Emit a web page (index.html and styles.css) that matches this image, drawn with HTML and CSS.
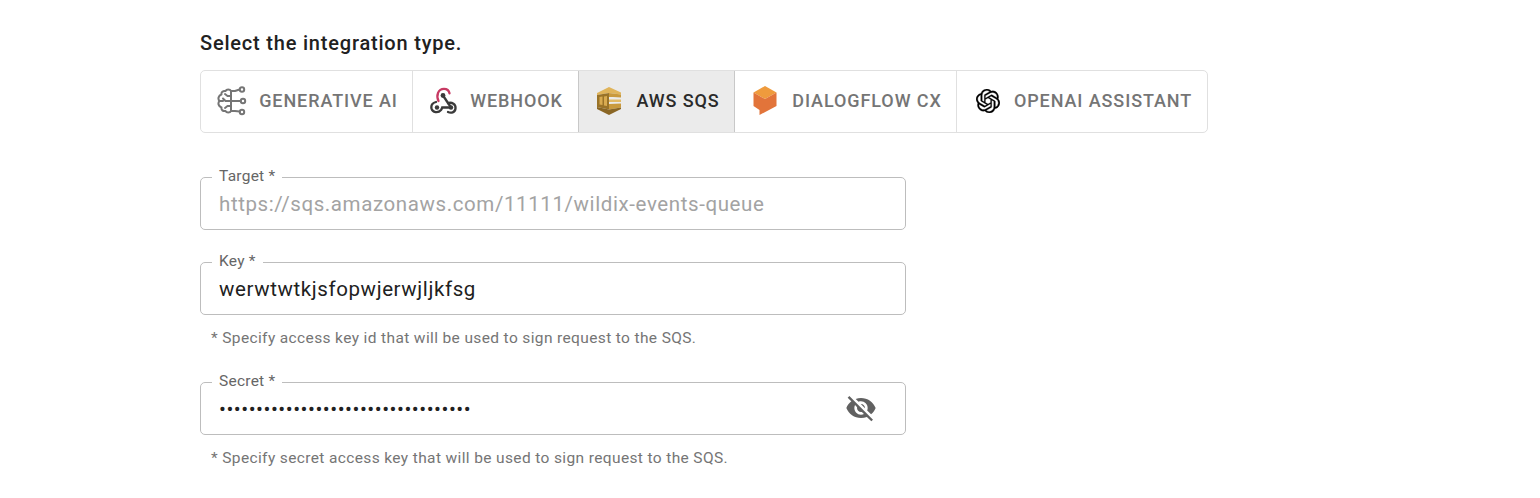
FILE: index.html
```html
<!DOCTYPE html>
<html lang="en">

<head>
    <meta charset="UTF-8">
    <meta name="viewport" content="width=device-width, initial-scale=1.0">
    <title>Integration type</title>
    <link rel="stylesheet" href="styles.css">
</head>

<body>

<div class="container">
    <h1 class="title">Select the integration type.</h1>

    <div class="toggle-group">
        <button class="toggle toggle-ai">
            <svg class="icon" width="30" height="30" viewBox="0 0 30 30" fill="none" stroke="#757575" stroke-width="2" stroke-linecap="round" stroke-linejoin="round">
                <path d="M14 5C13 3 9.500 3 8.500 5 6 4.500 4 6.500 4.500 8.500 1.500 9.500 .5 13 2.500 15 .5 17 1.500 20.500 4.500 21.500 4 24 6 25.500 8.500 25 9.500 27 13 27 14 25Z"/>
                <path d="M14 10H10.500L8 8M14 15H8.500L6 12.500M6 15H2.500M14 20H10.500L8 22"/>
                <path d="M14 5H18L22.500 3.500M14 15H23.500M14 25H18L22.500 25.500"/>
                <circle cx="25" cy="3.500" r="2.200" fill="#fff"/>
                <circle cx="26" cy="15" r="2.200" fill="#fff"/>
                <circle cx="25" cy="26" r="2.200" fill="#fff"/>
            </svg>
            <span>GENERATIVE AI</span>
        </button>
        <button class="toggle toggle-webhook">
            <svg class="icon" width="28" height="28" viewBox="0 0 28 28" fill="none" stroke-width="2.300" stroke-linecap="round">
                <path d="M8.500 14C6 8.500 8 1.800 14 1.800c3 0 5 2 5.500 4.500" stroke="#c73a63"/>
                <path d="M13 8.500L21 20.500" stroke="#3a3a3a"/>
                <path d="M6 15C2 16 1 19 1.500 21.500 2.500 25.500 8 26.500 11 23c.8-1 1-1.800 1.200-2.500H21" stroke="#3a3a3a"/>
                <path d="M18 16C22 15 26 17 25.500 21.500 25 25.500 21 26.500 18 25" stroke="#3a3a3a"/>
                <circle cx="13" cy="8.500" r="2.400" fill="#3a3a3a"/>
                <circle cx="7" cy="20.500" r="2.200" fill="#3a3a3a"/>
                <circle cx="21" cy="20.500" r="2.200" fill="#3a3a3a"/>
            </svg>
            <span>WEBHOOK</span>
        </button>
        <button class="toggle toggle-sqs selected">
            <svg class="icon" width="24" height="28" viewBox="0 0 24 28">
                <polygon points="12,0 24,5.500 24,7.500 12,6 0,8 0,6" fill="#e0b45a"/>
                <polygon points="0,8 12,6 12,22.500 0,20" fill="#9a7328"/>
                <polygon points="12,6 24,7.500 24,10.500 16,10 12,10" fill="#c99a3e"/>
                <polygon points="2.500,10 5.500,9.500 5.500,18 2.500,17.500" fill="#d9ab50"/>
                <polygon points="7,9.500 10,9 10,19 7,18.500" fill="#d9ab50"/>
                <polygon points="12,12.500 24,12.500 24,15 12,15" fill="#e3bb66"/>
                <polygon points="12,17 24,16.500 24,20.500 12,22.500" fill="#c99a3e"/>
                <polygon points="0,20 12,22.500 24,20.500 24,22 12,28 0,22" fill="#8a6624"/>
            </svg>
            <span>AWS SQS</span>
        </button>
        <button class="toggle toggle-cx">
            <svg class="icon" width="24" height="29" viewBox="0 0 24 29">
                <polygon points="12,0 23.500,6.500 12,13 .5,6.500" fill="#ef9b3d"/>
                <polygon points=".5,6.500 12,13 23.500,6.500 23.500,20 6.500,29 6.500,24 .5,20" fill="#e2743a"/>
            </svg>
            <span>DIALOGFLOW CX</span>
        </button>
        <button class="toggle toggle-openai">
            <svg class="icon" width="24" height="24" viewBox="0 0 24 24" fill="#000" stroke="#000" stroke-width="0.300">
                <path d="M22.2819 9.8211a5.9847 5.9847 0 0 0-.5157-4.9108 6.0462 6.0462 0 0 0-6.5098-2.9A6.0651 6.0651 0 0 0 4.9807 4.1818a5.9847 5.9847 0 0 0-3.9977 2.9 6.0462 6.0462 0 0 0 .7427 7.0966 5.98 5.98 0 0 0 .511 4.9107 6.051 6.051 0 0 0 6.5146 2.9001A5.9847 5.9847 0 0 0 13.2599 24a6.0557 6.0557 0 0 0 5.7718-4.2058 5.9894 5.9894 0 0 0 3.9977-2.9001 6.0557 6.0557 0 0 0-.7475-7.0729zm-9.022 12.6081a4.4755 4.4755 0 0 1-2.8764-1.0408l.1419-.0804 4.7783-2.7582a.7948.7948 0 0 0 .3927-.6813v-6.7369l2.02 1.1686a.071.071 0 0 1 .038.052v5.5826a4.504 4.504 0 0 1-4.4945 4.4944zm-9.6607-4.1254a4.4708 4.4708 0 0 1-.5346-3.0137l.142.0852 4.783 2.7582a.7712.7712 0 0 0 .7806 0l5.8428-3.3685v2.3324a.0804.0804 0 0 1-.0332.0615L9.74 19.9502a4.4992 4.4992 0 0 1-6.1408-1.6464zM2.3408 7.8956a4.485 4.485 0 0 1 2.3655-1.9728V11.6a.7664.7664 0 0 0 .3879.6765l5.8144 3.3543-2.0201 1.1685a.0757.0757 0 0 1-.071 0l-4.8303-2.7865A4.504 4.504 0 0 1 2.3408 7.872zm16.5963 3.8558L13.1038 8.364 15.1192 7.2a.0757.0757 0 0 1 .071 0l4.8303 2.7913a4.4944 4.4944 0 0 1-.6765 8.1042v-5.6772a.79.79 0 0 0-.407-.667zm2.0107-3.0231l-.142-.0852-4.7735-2.7818a.7759.7759 0 0 0-.7854 0L9.409 9.2297V6.8974a.0662.0662 0 0 1 .0284-.0615l4.8303-2.7866a4.4992 4.4992 0 0 1 6.6802 4.66zM8.3065 12.863l-2.02-1.1638a.0804.0804 0 0 1-.038-.0567V6.0742a4.4992 4.4992 0 0 1 7.3757-3.4537l-.142.0805L8.704 5.459a.7948.7948 0 0 0-.3927.6813zm1.0976-2.3654l2.602-1.4998 2.6069 1.4998v2.9994l-2.5974 1.4997-2.6067-1.4997Z"/>
            </svg>
            <span>OPENAI ASSISTANT</span>
        </button>
    </div>

    <div class="form">
        <div class="field field-target">
            <label class="field-label" for="target">Target *</label>
            <input class="field-input" id="target" type="text" placeholder="https://sqs.amazonaws.com/11111/wildix-events-queue">
        </div>

        <div class="field field-key">
            <label class="field-label" for="key">Key *</label>
            <input class="field-input" id="key" type="text" value="werwtwtkjsfopwjerwjljkfsg">
        </div>
        <p class="helper">* Specify access key id that will be used to sign request to the SQS.</p>

        <div class="field field-secret">
            <label class="field-label" for="secret">Secret *</label>
            <input class="field-input field-password" id="secret" type="password" value="abcdefghijklmnopqrstuvwxyzabcdefgh">
            <svg class="eye" width="32" height="32" viewBox="0 0 24 24" fill="#616161">
                <path d="M12 7c2.76 0 5 2.24 5 5 0 .65-.13 1.26-.36 1.83l2.92 2.92c1.51-1.26 2.7-2.89 3.43-4.75-1.73-4.39-6-7.5-11-7.5-1.4 0-2.74.25-3.98.7l2.16 2.16C10.74 7.13 11.35 7 12 7zM2 4.27l2.28 2.28.46.46C3.08 8.3 1.78 10.02 1 12c1.73 4.39 6 7.5 11 7.5 1.55 0 3.03-.3 4.38-.84l.42.42L19.73 22 21 20.73 3.27 3 2 4.27zM7.53 9.8l1.55 1.55c-.05.21-.08.43-.08.65 0 1.66 1.34 3 3 3 .22 0 .44-.03.65-.08l1.55 1.55c-.67.33-1.41.53-2.2.53-2.76 0-5-2.24-5-5 0-.79.2-1.53.53-2.2zm4.31-.78l3.15 3.15.02-.16c0-1.66-1.34-3-3-3l-.17.01z"/>
            </svg>
        </div>
        <p class="helper">* Specify secret access key that will be used to sign request to the SQS.</p>
    </div>
</div>

</body>

</html>
```

FILE: styles.css
```css
body {
    background-color: #fff;
    color: #212121;
    font-family: Roboto, "Liberation Sans", sans-serif;
    margin: 0;
}

.container {
    padding: 30px 0 0 200px;
}

.title {
    font-size: 20px;
    font-weight: 500;
    line-height: 26px;
    letter-spacing: 0.8px;
    margin: 0 0 14px;
}

.toggle-group {
    display: inline-flex;
    height: 63px;
    box-sizing: border-box;
    border: 1px solid #e0e0e0;
    border-radius: 5px;
    vertical-align: top;
}

.toggle {
    display: flex;
    align-items: center;
    justify-content: center;
    gap: 12px;
    box-sizing: border-box;
    height: 61px;
    padding: 0 0 2px 2px;
    background: none;
    border: none;
    border-left: 1px solid #e0e0e0;
    color: #757575;
    font-family: inherit;
    font-size: 18px;
    font-weight: 500;
    letter-spacing: 0.9px;
}

.toggle:first-child {
    border-left: none;
}

.toggle.selected {
    background-color: #ebebeb;
    color: #2a2a2a;
    border-left: 1px solid #c8c8c8;
    border-right: 1px solid #c8c8c8;
}

.selected + .toggle {
    border-left: none;
}

.toggle-ai { width: 211px; }
.toggle-webhook { width: 166px; }
.toggle-sqs { width: 157px; gap: 15px; padding-left: 4px; }
.toggle-cx { width: 221px; gap: 15px; padding-left: 4px; }
.toggle-openai { width: 251px; gap: 14px; padding-left: 4px; }

.icon {
    flex-shrink: 0;
}

.form {
    width: 706px;
    margin-top: 44px;
}

.field {
    position: relative;
    height: 53px;
}

.field-key {
    margin-top: 32px;
}

.field-secret {
    margin-top: 35px;
}

.field-label {
    position: absolute;
    top: -10px;
    left: 12px;
    padding: 0 7px;
    background-color: #fff;
    color: #666;
    font-size: 15.5px;
    line-height: 18px;
    letter-spacing: 0.25px;
}

.field-input {
    display: block;
    box-sizing: border-box;
    width: 100%;
    height: 53px;
    padding: 0 18px;
    border: 1px solid #bdbdbd;
    border-radius: 5px;
    color: #212121;
    font-family: inherit;
    font-size: 20.5px;
    letter-spacing: 0.6px;
    outline: none;
}

.field-input::placeholder {
    color: #a3a3a3;
    opacity: 1;
}

.field-password {
    padding-right: 60px;
    letter-spacing: 0.5px;
}

.eye {
    position: absolute;
    top: 10px;
    right: 29px;
}

.helper {
    margin: 14px 0 0 11px;
    color: #757575;
    font-size: 15.5px;
    line-height: 18px;
    letter-spacing: 0.37px;
}
```
